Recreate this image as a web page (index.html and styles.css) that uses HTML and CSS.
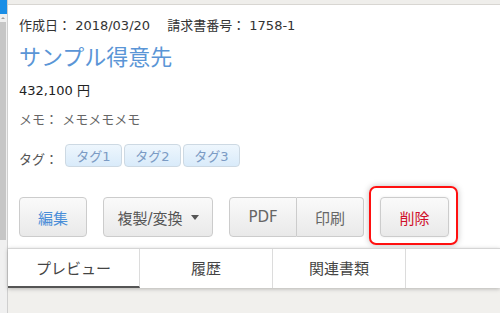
FILE: index.html
```html
<!DOCTYPE html>
<html lang="ja">
<head>
<meta charset="utf-8">
<link rel="stylesheet" href="styles.css">
</head>
<body>
<div class="page">
  <aside class="side">
    <div class="side-top"></div>
    <div class="side-track">
      <div class="side-arrow"></div>
      <div class="side-thumb"></div>
    </div>
  </aside>
  <main class="main">
    <div class="topstrip"></div>
    <section class="content">
      <div class="meta">作成日： 2018/03/20　 請求書番号： 1758-1</div>
      <h1 class="title">サンプル得意先</h1>
      <div class="amount">432,100 円</div>
      <div class="memo">メモ： メモメモメモ</div>
      <div class="tags">
        <span class="tag-label">タグ：</span>
        <span class="tag">タグ1</span>
        <span class="tag">タグ2</span>
        <span class="tag">タグ3</span>
      </div>
      <div class="actions">
        <button class="btn btn-edit">編集</button>
        <button class="btn btn-copy">複製/変換 <span class="caret"></span></button>
        <div class="group">
          <button class="btn btn-pdf">PDF</button>
          <button class="btn btn-print">印刷</button>
        </div>
        <button class="btn btn-delete">削除</button>
      </div>
    </section>
    <nav class="tabs">
      <div class="tab active">プレビュー</div>
      <div class="tab">履歴</div>
      <div class="tab">関連書類</div>
    </nav>
    <div class="below"></div>
  </main>
</div>
</body>
</html>
```

FILE: styles.css
```css
* { box-sizing: border-box; }
html, body { margin: 0; padding: 0; }
body {
  width: 500px;
  height: 313px;
  overflow: hidden;
  background: #f1f0ed;
  font-family: "DejaVu Sans", "Noto Sans CJK JP", sans-serif;
  color: #333;
}
.page {
  display: flex;
  height: 313px;
}
.side {
  width: 8px;
  flex: none;
  display: flex;
  flex-direction: column;
  border-right: 1px solid #cfcfcf;
  background: #f0f0f0;
}
.side-top {
  height: 14px;
  background: #1a8ee6;
}
.side-track {
  flex: 1;
  display: flex;
  flex-direction: column;
}
.side-arrow {
  height: 7px;
  margin-top: 1px;
  position: relative;
}
.side-arrow::before {
  content: "";
  position: absolute;
  left: 1px;
  top: 2px;
  border-left: 2px solid transparent;
  border-right: 2px solid transparent;
  border-bottom: 2px solid #a0a0a0;
}
.side-thumb {
  height: 218px;
  width: 6px;
  background: #c6c6c6;
}
.main {
  flex: 1;
  display: flex;
  flex-direction: column;
  min-width: 0;
}
.topstrip {
  height: 5px;
  background: #efeeeb;
  border-bottom: 1px solid #d8d6d2;
  flex: none;
}
.content {
  background: #fff;
  padding: 10px 0 11px 11px;
}
.meta {
  font-size: 13px;
  line-height: 20px;
  color: #333;
  margin-top: 1px;
}
.title {
  margin: 7px 0 0;
  font-size: 22px;
  font-weight: normal;
  line-height: 30px;
  color: #5a95d6;
}
.amount {
  margin-top: 8px;
  font-size: 13px;
  line-height: 20px;
  color: #222;
}
.memo {
  margin-top: 9px;
  font-size: 13px;
  line-height: 20px;
  color: #666;
}
.tags {
  margin-top: 14px;
  display: flex;
  align-items: center;
  gap: 2px;
  height: 23px;
}
.tag-label {
  font-size: 13px;
  color: #555;
  width: 44px;
  margin-top: 6px;
}
.tag {
  width: 57px;
  height: 23px;
  border: 1px solid #cdd9e3;
  border-radius: 4px;
  background: linear-gradient(#eef6fd, #d9ebfa);
  color: #7b9bc4;
  font-size: 13px;
  display: flex;
  align-items: center;
  justify-content: center;
}
.actions {
  margin-top: 30px;
  display: flex;
  gap: 16px;
  align-items: center;
}
.btn {
  height: 40px;
  border: 1px solid #cccccc;
  border-radius: 4px;
  background: linear-gradient(#fafafa, #e9e9e9);
  font-family: inherit;
  font-size: 15px;
  padding: 0;
  color: #666;
  display: flex;
  align-items: center;
  justify-content: center;
}
.btn-edit { width: 68px; color: #4a8ed8; }
.btn-copy { width: 110px; color: #555; gap: 6px; }
.caret {
  display: inline-block;
  border-left: 4px solid transparent;
  border-right: 4px solid transparent;
  border-top: 5px solid #555;
  margin-left: 2px;
}
.group { display: flex; }
.btn-pdf {
  width: 68px;
  border-radius: 4px 0 0 4px;
}
.btn-print {
  width: 67px;
  border-left: none;
  border-radius: 0 4px 4px 0;
}
.btn-delete {
  width: 69px;
  color: #d0102a;
  position: relative;
  box-shadow: 0 0 3px rgba(0,0,0,0.08);
}
.btn-delete::after {
  content: "";
  position: absolute;
  left: -12px;
  right: -10px;
  top: -12px;
  bottom: -9px;
  border: 2px solid #ff1010;
  border-radius: 7px;
  box-shadow: 0 0 6px rgba(0,0,0,0.25);
}
.tabs {
  display: flex;
  background: #fff;
  border-top: 1px solid #d5d5d5;
  height: 40px;
  box-shadow: 0 1px 4px rgba(0,0,0,0.25);
  position: relative;
}
.tab {
  width: 133px;
  border-right: 1px solid #dcdcdc;
  display: flex;
  align-items: center;
  justify-content: center;
  font-size: 15px;
  color: #444;
  padding-bottom: 2px;
}
.tab.active {
  width: 132px;
  border-bottom: 2px solid #555;
  padding-bottom: 0;
}
.below {
  flex: 1;
  background: #f1f0ed;
}
```
